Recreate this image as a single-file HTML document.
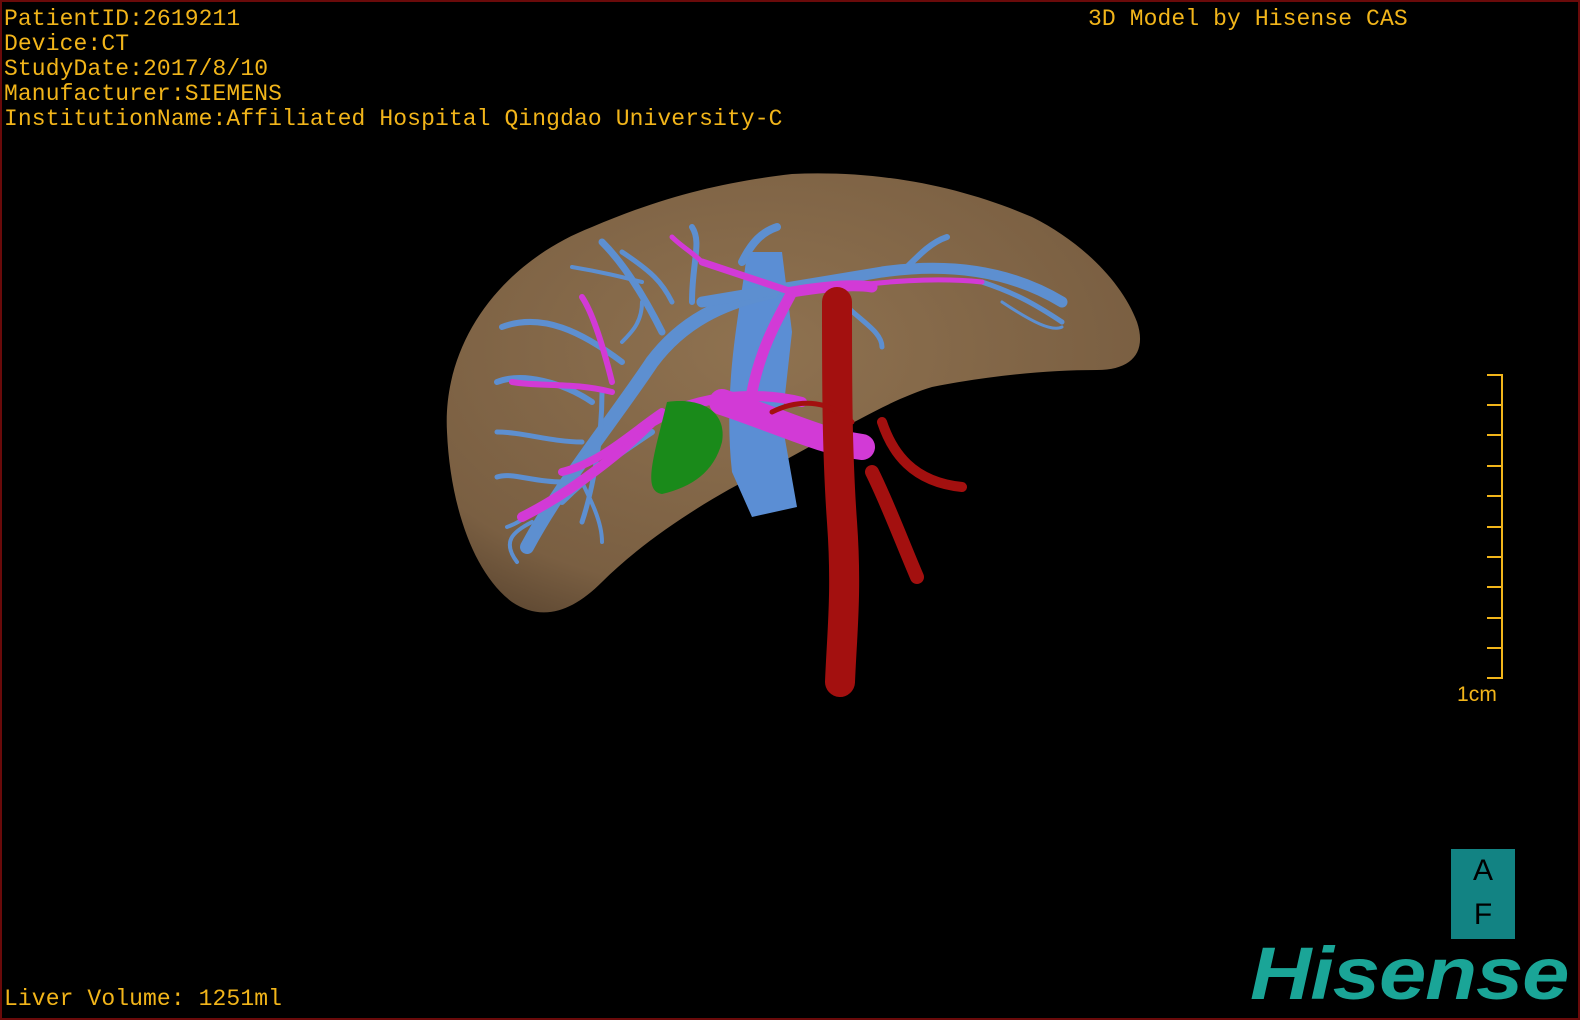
<!DOCTYPE html>
<html><head><meta charset="utf-8"><style>
html,body{margin:0;padding:0;background:#000;}
#c{position:relative;width:1580px;height:1020px;background:#000;overflow:hidden;box-sizing:border-box;border:2px solid #6a0a0a;}
.t{position:absolute;color:#f2b51a;font-family:"Liberation Mono",monospace;font-size:23px;line-height:25px;white-space:pre;letter-spacing:0.1px;}
</style></head><body><div id="c">
<svg width="1580" height="1020" style="position:absolute;left:0;top:0">
<defs><radialGradient id="lv" cx="0.45" cy="0.4" r="0.7"><stop offset="0" stop-color="#8f7250"/><stop offset="0.8" stop-color="#7a5f42"/><stop offset="1" stop-color="#5e4832"/></radialGradient></defs>
<path d="M445,430 C440,340 500,260 590,225 C660,195 720,180 790,172 C880,168 960,185 1030,215 C1080,240 1120,280 1135,320 C1145,350 1130,368 1095,368 C1040,368 980,375 930,385 C880,400 820,440 760,470 C700,500 640,540 600,580 C570,610 540,620 510,600 C470,570 448,500 445,430 Z" fill="url(#lv)"/>
<g fill="none" stroke-linecap="round" stroke="#5d8fd0">
<path d="M745,250 C740,300 720,380 730,470 L750,515 L795,505 L780,420 L790,330 L780,250 Z" fill="#5b8ed4" stroke="none"/>
<path d="M525,545 C560,480 610,420 650,360 C680,320 720,300 770,290" stroke-width="14"/>
<path d="M700,300 C760,290 820,280 880,270 C950,260 1010,270 1060,300" stroke-width="11"/>
<path d="M660,330 C640,290 620,260 600,240" stroke-width="7"/>
<path d="M620,360 C580,330 540,310 500,325" stroke-width="6"/>
<path d="M590,400 C560,380 520,370 495,380" stroke-width="6"/>
<path d="M580,440 C550,440 520,430 495,430" stroke-width="5"/>
<path d="M560,480 C530,480 510,470 495,475" stroke-width="5"/>
<path d="M560,500 C590,470 620,450 650,430" stroke-width="6"/>
<path d="M690,300 C690,260 700,240 690,225" stroke-width="6"/>
<path d="M740,260 C750,240 760,230 775,225" stroke-width="8"/>
<path d="M830,290 C850,320 840,340 830,355" stroke-width="6"/>
<path d="M900,270 C920,250 930,240 945,235" stroke-width="6"/>
<path d="M980,280 C1010,290 1030,300 1060,320" stroke-width="5"/>
<path d="M620,250 C650,270 660,280 670,300" stroke-width="5"/>
<path d="M570,265 C600,270 620,275 640,280" stroke-width="4"/>
<path d="M530,520 C510,530 500,540 515,560" stroke-width="4"/>
<path d="M600,390 C600,440 590,490 580,520" stroke-width="5"/>
<path d="M545,500 C530,510 520,520 505,525" stroke-width="4"/>
<path d="M575,470 C590,500 600,520 600,540" stroke-width="4"/>
<path d="M1000,300 C1030,320 1050,330 1060,325" stroke-width="3"/>
<path d="M840,300 C860,320 880,330 880,345" stroke-width="5"/>
<path d="M640,300 C640,320 630,330 620,340" stroke-width="4"/>
</g>
<g fill="none" stroke-linecap="round" stroke="#d23ad6">
<path d="M520,515 C570,490 620,450 650,420 C700,390 760,390 800,400" stroke-width="10"/>
<path d="M750,390 C760,340 780,310 790,290 C820,285 850,282 870,285" stroke-width="11"/>
<path d="M790,290 C760,280 730,270 700,260" stroke-width="7"/>
<path d="M840,285 C880,280 930,275 980,280" stroke-width="5"/>
<path d="M610,380 C600,340 590,310 580,295" stroke-width="6"/>
<path d="M610,390 C570,380 540,385 510,380" stroke-width="6"/>
<path d="M720,400 C780,420 820,440 860,445" stroke-width="26"/>
<path d="M560,470 C600,460 630,430 660,410" stroke-width="8"/>
<path d="M700,260 C690,250 680,245 670,235" stroke-width="5"/>
</g>
<g fill="none" stroke-linecap="round" stroke="#a3100f">
<path d="M835,300 C835,380 835,450 840,520 C845,590 840,630 838,680" stroke-width="30"/>
<path d="M870,470 C885,500 900,540 915,575" stroke-width="14"/>
<path d="M880,420 C890,450 910,480 960,485" stroke-width="10"/>
<path d="M770,410 C800,395 830,400 850,420" stroke-width="5"/>
</g>
<path d="M665,400 C700,395 725,410 720,440 C712,470 690,485 660,492 C645,490 648,470 655,440 Z" fill="#1a8a1a"/>
<g stroke="#f2b51a" stroke-width="2" fill="none">
<path d="M1500,372 L1500,677"/>
<path d="M1485,373 H1500 M1485,403 H1500 M1485,433 H1500 M1485,464 H1500 M1485,494 H1500 M1485,525 H1500 M1485,555 H1500 M1485,585 H1500 M1485,616 H1500 M1485,646 H1500 M1485,676 H1500"/>
</g>
</svg>
<div class="t" style="left:2px;top:5px">PatientID:2619211
Device:CT
StudyDate:2017/8/10
Manufacturer:SIEMENS
InstitutionName:Affiliated Hospital Qingdao University-C</div>
<div class="t" style="left:1086px;top:5px">3D Model by Hisense CAS</div>
<div class="t" style="left:1455px;top:680px;font-family:'Liberation Sans',sans-serif;font-size:21px">1cm</div>
<div class="t" style="left:2px;top:985px">Liver Volume: 1251ml</div>
<div style="position:absolute;left:1449px;top:847px;width:64px;height:90px;background:#128383;font-family:'Liberation Sans',sans-serif;font-size:30px;color:#000;text-align:center;line-height:44px">A<br>F</div>
<div style="position:absolute;left:1248px;top:935px;font-family:'Liberation Sans',sans-serif;font-weight:bold;font-style:italic;font-size:74px;line-height:74px;color:#1aa597;letter-spacing:-1px;transform:scaleX(1.15);transform-origin:left top;white-space:nowrap">Hisense</div>
</div></body></html>
